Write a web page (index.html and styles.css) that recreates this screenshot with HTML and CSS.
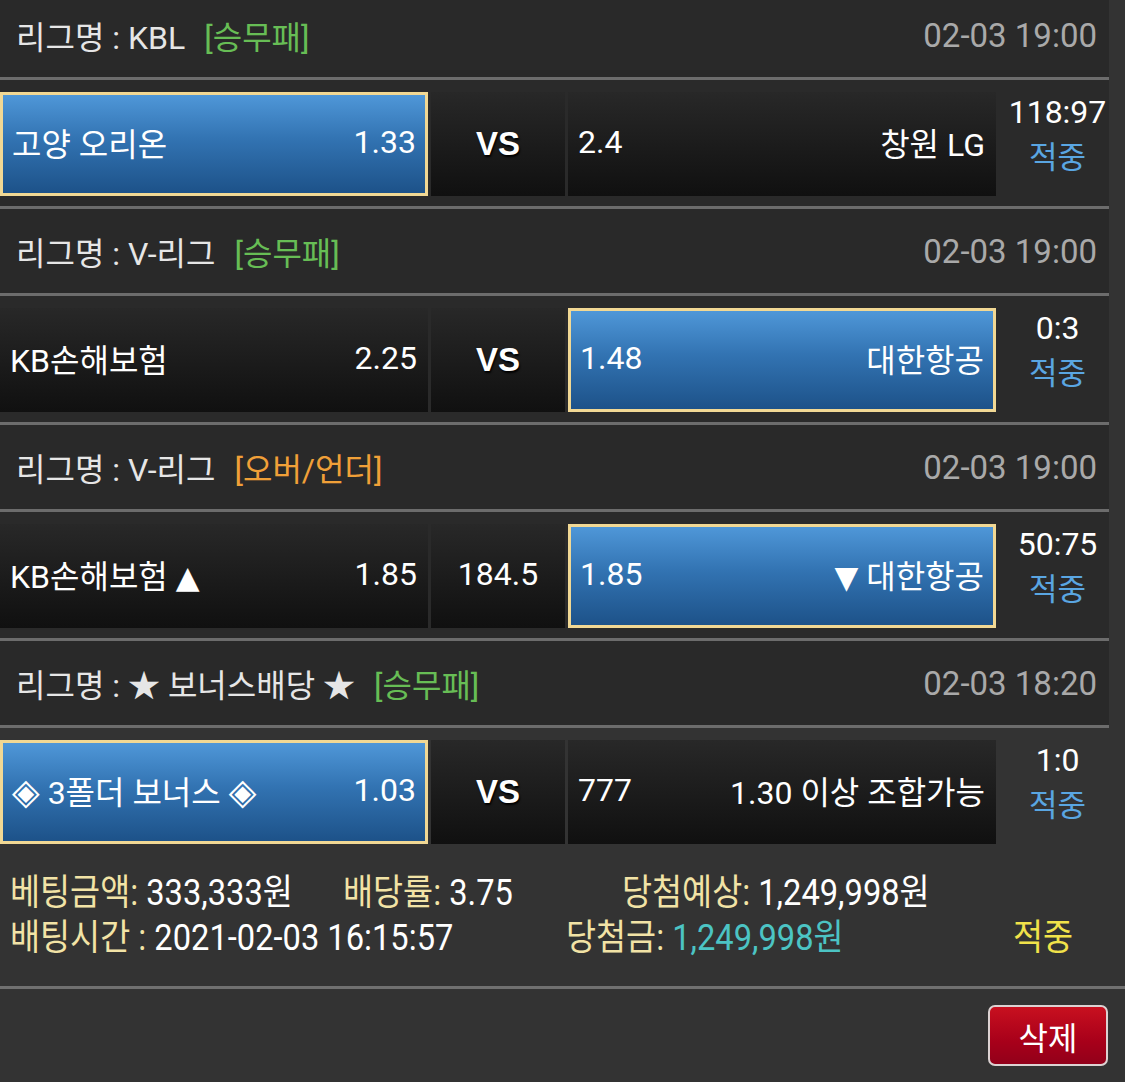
FILE: index.html
```html
<!DOCTYPE html>
<html lang="ko">
<head>
<meta charset="utf-8">
<title>배팅내역</title>
<link rel="stylesheet" href="styles.css">
</head>
<body>
<div class="page">
  <div class="list">
    <div class="league"><span class="lname">리그명 : KBL</span><span class="tag green">[승무패]</span><span class="date">02-03 19:00</span></div>
    <div class="match">
      <div class="cell team sel"><span>고양 오리온</span><span>1.33</span></div>
      <div class="cell mid vs">VS</div>
      <div class="cell team"><span>2.4</span><span>창원 LG</span></div>
      <div class="score"><span class="sc">118:97</span><span class="res">적중</span></div>
    </div>

    <div class="league"><span class="lname">리그명 : V-리그</span><span class="tag green">[승무패]</span><span class="date">02-03 19:00</span></div>
    <div class="match">
      <div class="cell team"><span>KB손해보험</span><span>2.25</span></div>
      <div class="cell mid vs">VS</div>
      <div class="cell team sel"><span>1.48</span><span>대한항공</span></div>
      <div class="score"><span class="sc">0:3</span><span class="res">적중</span></div>
    </div>

    <div class="league"><span class="lname">리그명 : V-리그</span><span class="tag orange">[오버/언더]</span><span class="date">02-03 19:00</span></div>
    <div class="match">
      <div class="cell team"><span>KB손해보험 <span class="tri">▲</span></span><span>1.85</span></div>
      <div class="cell mid">184.5</div>
      <div class="cell team sel"><span>1.85</span><span><span class="tri">▼</span> 대한항공</span></div>
      <div class="score"><span class="sc">50:75</span><span class="res">적중</span></div>
    </div>

    <div class="league"><span class="lname">리그명 : ★ 보너스배당 ★</span><span class="tag green">[승무패]</span><span class="date">02-03 18:20</span></div>
    <div class="match last">
      <div class="cell team sel"><span><span class="dia">◈</span> 3폴더 보너스 <span class="dia">◈</span></span><span>1.03</span></div>
      <div class="cell mid vs">VS</div>
      <div class="cell team"><span>777</span><span>1.30 이상 조합가능</span></div>
      <div class="score"><span class="sc">1:0</span><span class="res">적중</span></div>
    </div>
  </div>

  <div class="summary">
    <div class="srow">
      <div class="item w1"><span class="t"><span class="lbl">베팅금액:</span> 333,333원</span></div>
      <div class="item w2"><span class="t"><span class="lbl">배당률:</span> 3.75</span></div>
      <div class="item"><span class="t"><span class="lbl">당첨예상:</span> 1,249,998원</span></div>
    </div>
    <div class="srow">
      <div class="item w3"><span class="t"><span class="lbl">배팅시간 :</span> 2021-02-03 16:15:57</span></div>
      <div class="item w4"><span class="t"><span class="lbl">당첨금:</span> <span class="win">1,249,998원</span></span></div>
      <div class="item"><span class="t hit">적중</span></div>
    </div>
  </div>

  <div class="actions"><button class="del">삭제</button></div>
</div>
</body>
</html>
```

FILE: styles.css
```css
* { box-sizing: border-box; }
html, body { margin: 0; padding: 0; }
body {
  background: #333333;
  font-family: Roboto, "Noto Sans CJK KR", sans-serif;
  color: #ffffff;
  width: 1125px;
  height: 1082px;
  overflow: hidden;
}
.page { width: 1125px; }

.list {
  width: 1109px;
  background: #292929;
  margin-top: -7px;
}

.league {
  height: 87px;
  display: flex;
  align-items: center;
  padding: 0 12px 0 16px;
  font-size: 32px;
  border-bottom: 3px solid #6c6c6c;
  white-space: nowrap;
}
.lname { color: #e6e6e6; }
.tag { margin-left: 19px; }
.green { color: #67bd55; }
.orange { color: #f0a038; }
.date { margin-left: auto; color: #a9a9a9; font-size: 33px; }

.match {
  height: 129px;
  display: grid;
  grid-template-columns: 428px 134px 428px 1fr;
  column-gap: 3px;
  border-bottom: 3px solid #6c6c6c;
  background: #2a2a2a;
}
.match.last { border-bottom: none; background: #333333; height: 126px; }

.cell {
  margin: 12px 0 10px;
  background: linear-gradient(#282828, #1c1c1c 50%, #101010);
  font-size: 32px;
  color: #ffffff;
  padding-bottom: 5px;
}
.team {
  display: flex;
  align-items: center;
  justify-content: space-between;
  padding: 0 11px 5px 10px;
  white-space: nowrap;
}
.team.sel {
  border: 3px solid #f1d894;
  background: linear-gradient(#4f97d8, #3273b2 45%, #1d5289);
  padding: 0 9px 5px 9px;
}
.mid {
  display: flex;
  align-items: center;
  justify-content: center;
}
.vs {
  font-family: "Liberation Sans", Arial, sans-serif;
  font-weight: bold;
  font-size: 33px;
  text-shadow: 1px 2px 2px #000;
  padding-bottom: 0;
}
.dia { font-family: "DejaVu Sans", sans-serif; font-size: 36px; line-height: 1; }
.tri { font-family: "DejaVu Sans", sans-serif; font-size: 31px; line-height: 1; }

.score {
  display: flex;
  flex-direction: column;
  align-items: center;
  padding: 9px 0 0 7px;
  font-size: 32px;
  line-height: 46px;
}
.sc { color: #ffffff; }
.res { color: #5aa6e2; font-size: 31px; }

.summary {
  padding: 13px 0 29px 10px;
  border-bottom: 3px solid #707070;
}
.srow {
  display: flex;
  height: 45px;
  align-items: center;
}
.item { white-space: nowrap; }
.w1 { width: 333px; }
.w2 { width: 279px; }
.w3 { width: 556px; }
.w4 { width: 447px; }
.t {
  display: inline-block;
  font-size: 36.5px;
  transform: scaleX(0.895);
  transform-origin: left center;
  color: #ffffff;
}
.lbl { color: #f2e3a6; }
.win { color: #4cc4c4; }
.hit { color: #f1e24a; }

.actions {
  display: flex;
  justify-content: flex-end;
  padding: 16px 17px 0 0;
}
.del {
  width: 120px;
  height: 61px;
  border: 2px solid #dcd2d2;
  border-radius: 7px;
  background: linear-gradient(#c8101f, #a8001a 60%, #92001a);
  color: #ffffff;
  font-family: Roboto, "Noto Sans CJK KR", sans-serif;
  font-size: 32px;
  padding: 0;
  cursor: pointer;
}
```
